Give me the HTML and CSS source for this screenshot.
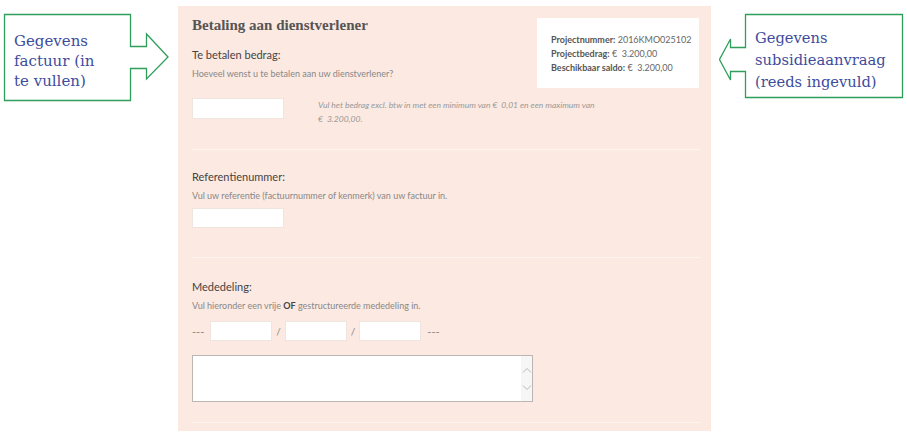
FILE: index.html
```html
<!DOCTYPE html>
<html lang="nl">
<head>
  <meta charset="UTF-8" />
  <title>Betaling aan dienstverlener</title>
  <meta name="viewport" content="width=device-width, initial-scale=1.0">
  <link rel="stylesheet" href="styles.css">
</head>
<body>
  <div class="callout callout-left">
    <svg class="outline" width="180" height="110" viewBox="0 0 180 110">
      <path d="M130.5,46.5 V14.5 H4.5 V100.5 H130.5 V68.5 H146.5 V79 L168,57 L146.5,34 V46.5 Z" />
    </svg>
    <p>Gegevens<br>factuur (in<br>te vullen)</p>
  </div>

  <div class="callout callout-right">
    <svg class="outline" width="200" height="110" viewBox="0 0 200 110">
      <path d="M26.5,47.5 V14.5 H183.5 V97.5 H26.5 V71.5 H11.5 V80 L0.5,59.5 L11.5,39 V47.5 Z" />
    </svg>
    <p>Gegevens<br>subsidieaanvraag<br>(reeds ingevuld)</p>
  </div>

  <div class="panel">
    <div class="info">
      <div><b>Projectnummer:</b> 2016KMO025102</div>
      <div><b>Projectbedrag:</b> € &nbsp;3.200,00</div>
      <div><b>Beschikbaar saldo:</b> € &nbsp;3.200,00</div>
    </div>

    <h2 class="title">Betaling aan dienstverlener</h2>

    <div class="section first">
      <div class="label">Te betalen bedrag:</div>
      <div class="help">Hoeveel wenst u te betalen aan uw dienstverlener?</div>
      <div class="amount-row">
        <input type="text" class="field">
        <div class="hint">Vul het bedrag excl. btw in met een minimum van € &nbsp;0,01 en een maximum van <span class="nowrap">€ &nbsp;3.200,00.</span></div>
      </div>
    </div>

    <div class="section">
      <div class="label">Referentienummer:</div>
      <div class="help">Vul uw referentie (factuurnummer of kenmerk) van uw factuur in.</div>
      <input type="text" class="field ref">
    </div>

    <div class="section last">
      <div class="label">Mededeling:</div>
      <div class="help">Vul hieronder een vrije <b>OF</b> gestructureerde mededeling in.</div>
      <div class="struct-row">
        <span class="sep dash">---</span>
        <input type="text" class="field small">
        <span class="sep">/</span>
        <input type="text" class="field small">
        <span class="sep">/</span>
        <input type="text" class="field small">
        <span class="sep dash">---</span>
      </div>
      <div class="memo">
        <textarea></textarea>
        <div class="scroll">
          <svg width="10" height="6" viewBox="0 0 10 6"><path d="M1,5.5 L5,1.5 L9,5.5" /></svg>
          <svg width="10" height="6" viewBox="0 0 10 6"><path d="M1,0.5 L5,4.5 L9,0.5" /></svg>
        </div>
      </div>
    </div>
  </div>
</body>
</html>
```

FILE: styles.css
```css
body {
  margin: 0;
  padding: 6px 0 0 178px;
  background: #fff;
  font-family: Lato, "Open Sans", sans-serif;
  color: #444;
}

.callout {
  position: absolute;
  top: 0;
}

.callout-left {
  left: 0;
}

.callout-right {
  left: 719px;
}

.outline path {
  fill: none;
  stroke: #2f9e5a;
  stroke-width: 1.3;
}

.callout p {
  position: absolute;
  margin: 0;
  font-family: "DejaVu Serif", serif;
  font-size: 15px;
  line-height: 20px;
  color: #3d4c9c;
  white-space: nowrap;
}

.callout-left p {
  left: 14px;
  top: 31px;
}

.callout-right p {
  left: 36px;
  top: 27px;
  font-size: 14.7px;
  line-height: 22px;
}

.panel {
  position: relative;
  width: 508px;
  height: 425px;
  padding: 0 11px 0 14px;
  background: #fce9e1;
  box-sizing: content-box;
}

.info {
  position: absolute;
  top: 12px;
  right: 12px;
  width: 148px;
  height: 55px;
  padding: 15px 0 0 14px;
  background: #fff;
  font-size: 9px;
  line-height: 14px;
  color: #666;
  white-space: nowrap;
}

.info b {
  color: #555;
}

.title {
  margin: 0;
  padding-top: 9px;
  font-family: "Liberation Serif", serif;
  font-size: 15px;
  line-height: 20px;
  font-weight: bold;
  color: #555;
}

.section {
  border-bottom: 1px solid #fdf4f0;
  padding: 17px 0 29px;
}

.section.first {
  padding: 10px 0 23px;
}

.section.last {
  padding: 19px 0 20px;
}

.label {
  font-size: 11px;
  line-height: 20px;
  color: #444;
}

.help {
  margin-top: 1px;
  font-size: 9px;
  line-height: 16px;
  color: #888;
}

.help b {
  color: #444;
}

.field {
  display: block;
  box-sizing: border-box;
  width: 92px;
  height: 21px;
  margin: 0;
  padding: 2px 4px;
  background: #fff;
  border: 1px solid #f0e4df;
  font: inherit;
}

.amount-row {
  display: flex;
  gap: 34px;
  margin-top: 16px;
}

.hint {
  width: 290px;
  font-size: 8.5px;
  font-style: italic;
  line-height: 14px;
  color: #999;
}

.nowrap {
  white-space: nowrap;
}

.field.ref {
  margin-top: 4px;
  height: 20px;
}

.struct-row {
  display: flex;
  align-items: center;
  gap: 4px;
  margin-top: 7px;
}

.field.small {
  width: 62px;
  height: 20px;
}

.sep {
  font-size: 10px;
  color: #888;
}

.sep.dash {
  font-size: 11px;
  margin-right: 2px;
}

.sep.dash:last-child {
  margin: 0 0 0 2px;
}

.memo {
  display: flex;
  width: 341px;
  height: 47px;
  margin-top: 14px;
  box-sizing: border-box;
  border: 1px solid #bcb6b3;
  background: #fff;
}

.memo textarea {
  flex: 1;
  border: 0;
  margin: 0;
  padding: 2px;
  resize: none;
  outline: none;
  background: #fff;
}

.scroll {
  width: 11px;
  background: #f6f6f6;
  display: flex;
  flex-direction: column;
  align-items: center;
  justify-content: center;
  gap: 12px;
}

.scroll path {
  fill: none;
  stroke: #b8b8b8;
  stroke-width: 1;
}
```
